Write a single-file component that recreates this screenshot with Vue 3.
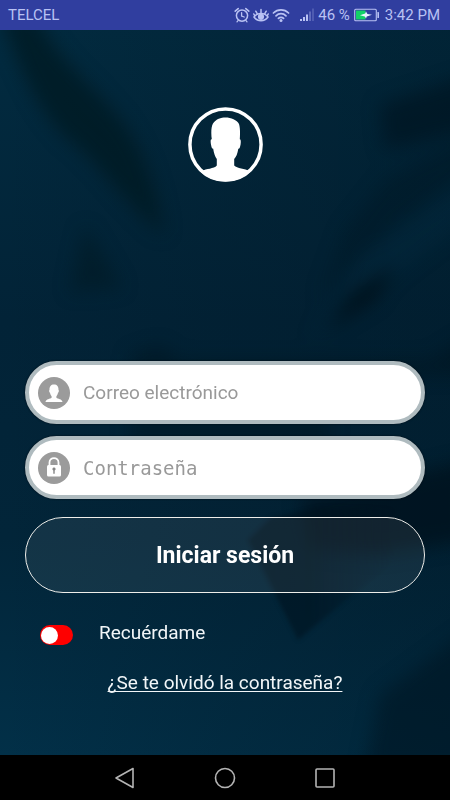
<script setup>
import { ref } from 'vue'

const email = ref('')
const password = ref('')
const remember = ref(false)
</script>

<template>
  <div class="screen">
    <header class="status">
      <span class="carrier">TELCEL</span>
      <div class="indicators">
        <svg class="ic-small" viewBox="0 0 16 16" aria-hidden="true">
          <g fill="none" stroke="currentColor" stroke-linecap="round">
            <circle cx="8" cy="8.6" r="5.6" stroke-width="1.500" />
            <path d="M1.200 4.200 4.200 1.600M14.800 4.200 11.800 1.600" stroke-width="1.600" />
            <path d="M7.600 5.600v3.400l2.600 1M4.200 13.400 3 14.800M11.800 13.400l1.200 1.400" stroke-width="1.300" />
          </g>
        </svg>
        <svg class="ic-small" viewBox="0 0 16 16" aria-hidden="true">
          <g fill="none" stroke="currentColor" stroke-width="1.500" stroke-linecap="round">
            <path d="M1 10C4.500 5.200 11.500 5.200 15 10C11.500 15 4.500 15 1 10Z" />
            <path d="M8 5.800V2.400M4.200 6.600 2.800 4.200M11.800 6.600 13.200 4.200M1.600 8.400 .8 7M14.400 8.400l.8-1.400" />
          </g>
          <circle cx="8" cy="9.800" r="3.100" fill="currentColor" />
        </svg>
        <svg class="ic-wifi" viewBox="0 0 18 16" aria-hidden="true">
          <g fill="none" stroke="currentColor" stroke-width="1.700" stroke-linecap="round">
            <path d="M1.400 6C5.600 1.800 12.400 1.800 16.600 6M4 8.800c2.800-2.800 7.200-2.800 10 0M6.400 11.400c1.500-1.500 3.700-1.500 5.200 0" />
          </g>
          <circle cx="9" cy="13.600" r="1.500" fill="currentColor" />
        </svg>
        <svg class="ic-signal" viewBox="0 0 16 16" aria-hidden="true">
          <g fill="currentColor">
            <path d="M1 12h2v2H1zM4 10h2v4H4zM7 7.500h2V14H7z" />
            <path d="M10 4.500h2V14h-2z" opacity=".35" />
            <path d="M13 1.500h2V14h-2z" opacity=".22" />
          </g>
        </svg>
        <span class="percent">46 %</span>
        <svg class="ic-battery" viewBox="0 0 26 14" aria-hidden="true">
          <rect x=".7" y="1.200" width="21.600" height="11.600" rx="1" fill="none" stroke="currentColor" stroke-width="1.100" />
          <rect x="2" y="2.500" width="9.500" height="9" fill="#12d267" />
          <rect x="23.400" y="4" width="1.600" height="6" rx=".5" fill="currentColor" />
          <path d="M6 7.200 11.200 5.600 12 3.600 13.400 6 18 6.800 12.800 8.600 12 10.600 10.800 8.400Z" fill="#e8f4ff" />
        </svg>
        <span>3:42 PM</span>
      </div>
    </header>

    <main class="login">
      <svg class="backdrop" viewBox="0 0 450 725" preserveAspectRatio="none" aria-hidden="true">
        <defs>
          <linearGradient id="base" x1="0" y1="0" x2="0" y2="1">
            <stop offset="0" stop-color="#022b40" />
            <stop offset=".4" stop-color="#022337" />
            <stop offset=".7" stop-color="#022539" />
            <stop offset="1" stop-color="#023048" />
          </linearGradient>
          <linearGradient id="side" x1="0" y1="0" x2="1" y2="0">
            <stop offset="0" stop-color="#001420" stop-opacity="0" />
            <stop offset=".5" stop-color="#001420" stop-opacity=".18" />
            <stop offset="1" stop-color="#001420" stop-opacity=".32" />
          </linearGradient>
          <filter id="soft" filterUnits="userSpaceOnUse" x="-60" y="-60" width="570" height="845" color-interpolation-filters="sRGB">
            <feGaussianBlur stdDeviation="9" />
          </filter>
          <filter id="edge" filterUnits="userSpaceOnUse" x="-60" y="-60" width="570" height="845" color-interpolation-filters="sRGB">
            <feGaussianBlur stdDeviation="2" />
          </filter>
          <linearGradient id="fold" x1="0" y1="0" x2="1" y2="0">
            <stop offset="0" stop-color="#00121e" stop-opacity=".6" />
            <stop offset=".35" stop-color="#00121e" stop-opacity=".55" />
            <stop offset=".8" stop-color="#00121e" stop-opacity="0" />
          </linearGradient>
        </defs>
        <rect width="450" height="725" fill="url(#base)" />
        <rect width="450" height="725" fill="url(#side)" />
        <g filter="url(#soft)">
          <path d="M0-15H38C50 25 95 55 125 95C145 125 158 160 164 205C130 180 100 135 75 115C40 88 20 40 0-15Z" fill="#001a22" opacity=".75" />
          <path d="M85 195 122 258 70 262Z" fill="#001820" opacity=".5" />
          <path d="M380 75 470 45V100L385 120Z" fill="#00121e" opacity=".6" />
          <path d="M470 105 385 150 345 200 320 270 400 190 470 140Z" fill="#001420" opacity=".35" />
          <path d="M470 150 360 225 310 310 470 190Z" fill="#023048" opacity=".25" />
          <path d="M325 300 350 265 395 235 375 270Z" fill="#000c14" opacity=".75" />
          <path d="M130 325 160 315 180 330H430L470 305V345H130Z" fill="#00121a" opacity=".45" />
          <path d="M130 390H330V408H130Z" fill="#00121a" opacity=".5" />
          <path d="M300 470 470 430V510L380 525 310 520Z" fill="#000e18" opacity=".6" />
          <path d="M365 740 380 665 470 600V740Z" fill="#001420" opacity=".55" />
        </g>
        <path d="M248 510 270 488 320 478 430 480 405 525 370 550 298 610Z" fill="url(#fold)" filter="url(#edge)" />
      </svg>

      <svg class="avatar" viewBox="0 0 75 75" role="img" aria-label="Usuario">
        <defs>
          <clipPath id="round"><circle cx="37.500" cy="37.500" r="37" /></clipPath>
        </defs>
        <circle cx="37.500" cy="37.500" r="35.600" fill="none" stroke="#fff" stroke-width="3.500" />
        <path clip-path="url(#round)" fill="#fff" d="M37.500 10.500C43 10.500 49 13 51 17C52.500 22 52 28 51.800 32.300C53.200 32 53 37 52 40C51.500 41.700 50.800 41.700 50.300 41.700C49.500 47 48 50 46.200 52V58.500C49 61.500 57 61.500 61.500 64L70 80H5L14 64C18 61.500 26 62 28.800 58.500V52C27 49.500 25.800 46 25.200 41.700C23.700 42 23.300 39 22.800 36.500C22.500 34 22.500 32 23.800 32.300C23 27 23 20 25 16.500C28 12 33 10.500 37.500 10.500Z" />
      </svg>

      <form class="form" @submit.prevent>
        <div class="field">
          <label for="email" aria-label="Correo electrónico">
            <svg class="badge" viewBox="0 0 32 32" aria-hidden="true">
              <circle cx="16" cy="16" r="16" fill="#9b9b9b" />
              <path fill="#fff" d="M16 7.500C19 7.500 20.700 9.500 20.500 13C21.300 13.200 20.800 15.400 20 15.800C19.700 17.500 18.800 18.700 18.400 19.200V20.800C19.800 22 24 22 24.500 25H7.500C8 22 12.200 22 13.600 20.800V19.200C13.200 18.700 12.300 17.500 12 15.800C11.200 15.400 10.700 13.200 11.500 13C11.300 9.500 13 7.500 16 7.500Z" />
            </svg>
          </label>
          <input id="email" v-model="email" type="email" placeholder="Correo electrónico" />
        </div>
        <div class="field">
          <label for="password" aria-label="Contraseña">
            <svg class="badge" viewBox="0 0 32 32" aria-hidden="true">
              <circle cx="16" cy="16" r="16" fill="#9b9b9b" />
              <path d="M11.500 14V10.500C11.500 4.600 20.500 4.600 20.500 10.500V14" fill="none" stroke="#fff" stroke-width="1.800" />
              <rect x="9" y="13" width="14" height="11.500" rx="1.500" fill="#fff" />
              <path d="M16 15.400a1.700 1.700 0 0 1 .7 3.200V21.800h-1.400V18.600A1.700 1.700 0 0 1 16 15.400Z" fill="#858585" />
            </svg>
          </label>
          <input id="password" v-model="password" class="mono" type="password" placeholder="Contraseña" />
        </div>
        <button class="submit" type="submit">Iniciar sesión</button>
        <label class="remember">
          <input v-model="remember" class="switch" type="checkbox" role="switch" />
          <span>Recuérdame</span>
        </label>
        <a class="forgot" href="#">¿Se te olvidó la contraseña?</a>
      </form>
    </main>

    <nav class="navbar">
      <button type="button" aria-label="Atrás">
        <svg viewBox="0 0 24 24"><path d="M20 2.500V21.500L3 12Z" /></svg>
      </button>
      <button type="button" aria-label="Inicio">
        <svg viewBox="0 0 24 24"><circle cx="12" cy="12" r="9.500" /></svg>
      </button>
      <button type="button" aria-label="Recientes">
        <svg viewBox="0 0 24 24"><rect x="3" y="3" width="18" height="18" rx="1" /></svg>
      </button>
    </nav>
  </div>
</template>

<style>
body {
  background: #000;
}
</style>

<style scoped>
.screen {
  display: flex;
  flex-direction: column;
  min-height: 100vh;
  font-family: Roboto, "Liberation Sans", sans-serif;
}

.status {
  display: flex;
  align-items: center;
  justify-content: space-between;
  height: 30px;
  padding: 0 10px 0 8px;
  background: #303e9f;
  color: #b9c2f3;
  font-size: 15px;
}

.indicators {
  display: flex;
  align-items: center;
  gap: 3px;
}

.indicators svg {
  display: block;
}

.ic-small {
  width: 16px;
  height: 16px;
}

.ic-wifi {
  width: 18px;
  height: 16px;
}

.ic-signal {
  width: 16px;
  height: 16px;
  margin-left: 6px;
}

.ic-battery {
  width: 26px;
  height: 14px;
  margin: 0 2px 0 1px;
}

.login {
  position: relative;
  flex: 1;
  display: flex;
  flex-direction: column;
  align-items: center;
  padding: 77px 25px 60px;
  isolation: isolate;
}

.backdrop {
  position: absolute;
  inset: 0;
  z-index: -1;
  width: 100%;
  height: 100%;
}

.avatar {
  width: 75px;
  height: 75px;
}

.form {
  display: flex;
  flex-direction: column;
  align-items: stretch;
  gap: 12px;
  width: 100%;
  margin-top: 179px;
}

.field {
  display: flex;
  align-items: center;
  gap: 13px;
  box-sizing: border-box;
  height: 63px;
  padding: 0 28px 0 9px;
  border: 4px solid #afbbbf;
  border-radius: 32px;
  background: #fff;
  box-shadow: 0 0 2px #000a12;
}

.badge {
  display: block;
  width: 32px;
  height: 32px;
}

.field input {
  flex: 1;
  min-width: 0;
  padding: 0;
  border: 0;
  outline: 0;
  background: transparent;
  color: #333;
  font-family: inherit;
  font-size: 19px;
}

.field input.mono {
  font-family: "DejaVu Sans Mono", monospace;
}

.field input::placeholder {
  color: #999;
  opacity: 1;
}

.submit {
  height: 76px;
  margin-top: 6px;
  border: 1px solid #eeeeea;
  border-radius: 38px;
  background: rgba(255, 255, 255, 0.07);
  color: #fff;
  font-family: inherit;
  font-size: 23px;
  font-weight: 700;
}

.remember {
  display: flex;
  align-items: center;
  gap: 26px;
  margin-top: 16px;
  padding-left: 15px;
  color: #f2f6f8;
  font-size: 19px;
  line-height: 24px;
}

.switch {
  appearance: none;
  display: flex;
  align-items: center;
  box-sizing: border-box;
  width: 33px;
  height: 20px;
  margin: 4px 0 0;
  padding: 0 1px;
  border-radius: 10px;
  background: #fe0000;
}

.switch::before {
  content: "";
  width: 17px;
  height: 17px;
  border-radius: 50%;
  background: #fff;
}

.switch:checked {
  justify-content: flex-end;
  background: #2ea84f;
}

.forgot {
  align-self: center;
  margin-top: 14px;
  color: #f2f6f8;
  font-size: 19px;
  line-height: 24px;
  text-decoration-thickness: 1px;
  text-decoration-skip-ink: none;
  text-underline-offset: 2px;
}

.navbar {
  display: flex;
  align-items: center;
  justify-content: center;
  gap: 76px;
  height: 45px;
  background: #000;
}

.navbar button {
  padding: 0;
  border: 0;
  background: transparent;
}

.navbar svg {
  display: block;
  width: 24px;
  height: 24px;
  fill: none;
  stroke: #b4b4b4;
  stroke-width: 1.6;
  stroke-linejoin: round;
}
</style>
